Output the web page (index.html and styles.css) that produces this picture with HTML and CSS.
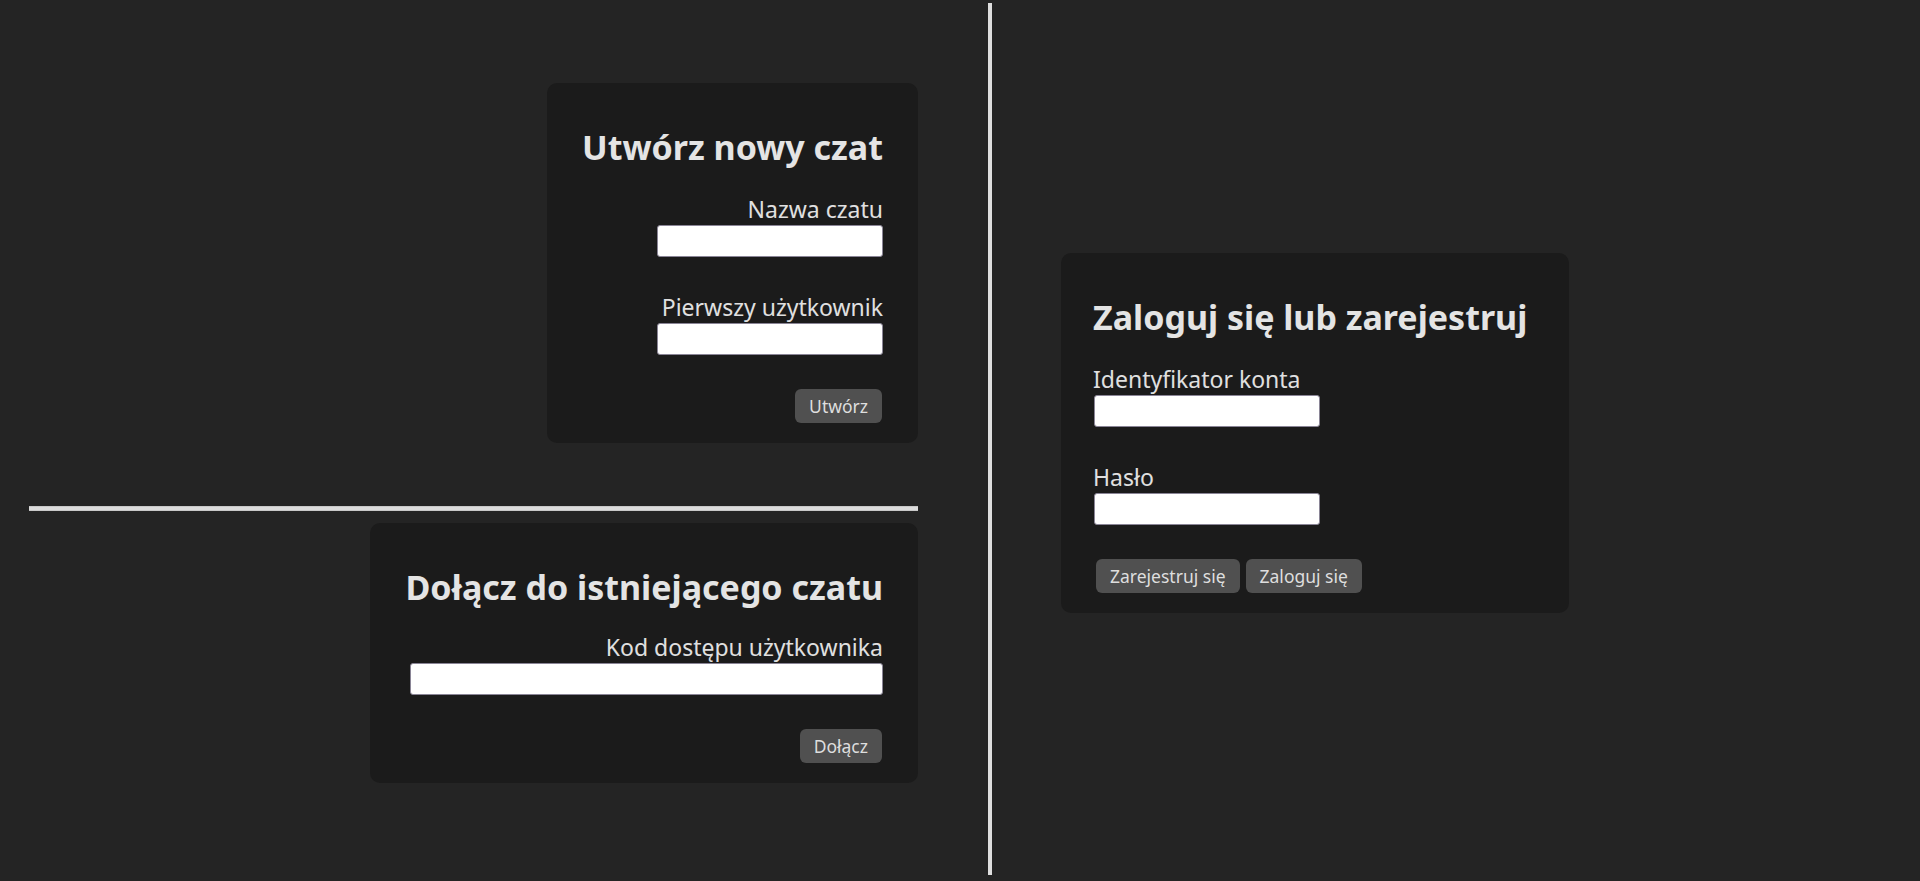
FILE: index.html
```html
<!DOCTYPE html>
<html lang="pl">
<head>
<meta charset="utf-8">
<title>Czat</title>
<link rel="stylesheet" href="styles.css">
</head>
<body>
<div class="page">
  <div class="left">
    <form class="card card-right">
      <h2 class="title">Utwórz nowy czat</h2>
      <label class="label">Nazwa czatu</label>
      <input class="field" type="text">
      <label class="label label-gap">Pierwszy użytkownik</label>
      <input class="field" type="text">
      <div class="actions actions-right">
        <button type="button" class="btn">Utwórz</button>
      </div>
    </form>
    <div class="hline"></div>
    <form class="card card-right card-join">
      <h2 class="title">Dołącz do istniejącego czatu</h2>
      <label class="label">Kod dostępu użytkownika</label>
      <input class="field field-wide" type="text">
      <div class="actions actions-right">
        <button type="button" class="btn">Dołącz</button>
      </div>
    </form>
  </div>
  <div class="vline"></div>
  <div class="right">
    <form class="card card-left">
      <h2 class="title">Zaloguj się lub zarejestruj</h2>
      <label class="label">Identyfikator konta</label>
      <input class="field" type="text">
      <label class="label label-gap">Hasło</label>
      <input class="field" type="password">
      <div class="actions actions-left">
        <button type="button" class="btn">Zarejestruj się</button>
        <button type="button" class="btn">Zaloguj się</button>
      </div>
    </form>
  </div>
</div>
</body>
</html>
```
FILE: styles.css
```css
* { box-sizing: border-box; }
html, body {
  margin: 0;
  padding: 0;
  background: #242424;
  height: 881px;
  overflow: hidden;
}
body {
  font-family: "Noto Sans", "Open Sans", sans-serif;
  color: #e2e2e2;
}
.page {
  display: flex;
  height: 881px;
}
.left {
  width: 988px;
  flex: none;
  padding: 83px 70px 0 29px;
  display: flex;
  flex-direction: column;
  align-items: flex-end;
}
.hline {
  align-self: stretch;
  height: 5px;
  background: #dcdcdc;
  border-top: 1px solid #c8c8c8;
  border-bottom: 1px solid #c8c8c8;
  margin: 63px 0 12px;
}
.vline {
  width: 4px;
  flex: none;
  margin: 3px 0 6px;
  background: #dedede;
}
.right {
  flex: 1;
  padding-left: 69px;
  display: flex;
  align-items: flex-start;
}
.card {
  background: #1b1b1b;
  border-radius: 10px;
  padding: 41px 35px 20px;
  display: flex;
  flex-direction: column;
  margin: 0;
}
.card-right { align-items: flex-end; text-align: right; }
.card-join .title { margin-bottom: 21px; }
.card-left {
  align-items: flex-start;
  margin-top: 253px;
  padding-left: 32px;
  padding-right: 42px;
}
.title {
  margin: 0 0 23px;
  font-size: 34px;
  font-weight: 700;
  line-height: normal;
  color: #e4e4e4;
  white-space: nowrap;
}
.label {
  display: block;
  font-size: 23px;
  line-height: normal;
  color: #e0e0e0;
}
.label-gap { margin-top: 34px; }
.field {
  display: block;
  width: 226px;
  height: 32px;
  background: #ffffff;
  border: 1px solid #8a8596;
  border-radius: 3px;
  padding: 2px 6px;
  font: inherit;
  font-size: 16px;
}
.card-left .field { margin-left: 1px; }
.field-wide { width: 473px; }
.actions {
  display: flex;
  gap: 6px;
  margin-top: 34px;
}
.actions-right { padding-right: 1px; }
.actions-left { padding-left: 3px; }
.btn {
  font-family: "Noto Sans", "Open Sans", sans-serif;
  font-size: 17.5px;
  line-height: 24px;
  color: #dedede;
  background: #505050;
  border: none;
  border-radius: 6px;
  padding: 5px 14px;
  margin: 0;
  cursor: pointer;
}
```
